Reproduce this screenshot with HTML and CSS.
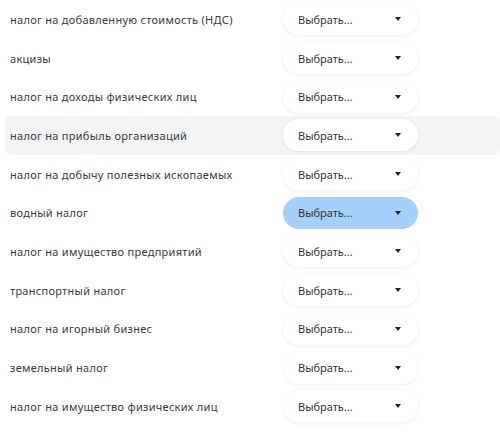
FILE: index.html
```html
<!DOCTYPE html>
<html lang="ru">
<head>
    <meta charset="UTF-8">
    <title>Налоги</title>
    <link rel="stylesheet" href="styles.css">
</head>
<body>
    <div class="tax-list">
        <div class="tax-row">
            <span class="tax-name">налог на добавленную стоимость (НДС)</span>
            <div class="select"><span>Выбрать...</span><i class="arrow"></i></div>
        </div>
        <div class="tax-row">
            <span class="tax-name">акцизы</span>
            <div class="select"><span>Выбрать...</span><i class="arrow"></i></div>
        </div>
        <div class="tax-row">
            <span class="tax-name">налог на доходы физических лиц</span>
            <div class="select"><span>Выбрать...</span><i class="arrow"></i></div>
        </div>
        <div class="tax-row hover">
            <span class="tax-name">налог на прибыль организаций</span>
            <div class="select"><span>Выбрать...</span><i class="arrow"></i></div>
        </div>
        <div class="tax-row">
            <span class="tax-name">налог на добычу полезных ископаемых</span>
            <div class="select"><span>Выбрать...</span><i class="arrow"></i></div>
        </div>
        <div class="tax-row">
            <span class="tax-name">водный налог</span>
            <div class="select active"><span>Выбрать...</span><i class="arrow"></i></div>
        </div>
        <div class="tax-row">
            <span class="tax-name">налог на имущество предприятий</span>
            <div class="select"><span>Выбрать...</span><i class="arrow"></i></div>
        </div>
        <div class="tax-row">
            <span class="tax-name">транспортный налог</span>
            <div class="select"><span>Выбрать...</span><i class="arrow"></i></div>
        </div>
        <div class="tax-row">
            <span class="tax-name">налог на игорный бизнес</span>
            <div class="select"><span>Выбрать...</span><i class="arrow"></i></div>
        </div>
        <div class="tax-row">
            <span class="tax-name">земельный налог</span>
            <div class="select"><span>Выбрать...</span><i class="arrow"></i></div>
        </div>
        <div class="tax-row">
            <span class="tax-name">налог на имущество физических лиц</span>
            <div class="select"><span>Выбрать...</span><i class="arrow"></i></div>
        </div>
    </div>
</body>
</html>
```

FILE: styles.css
```css
body {
    margin: 0;
    padding: 0;
    background-color: #fff;
    font-family: "Noto Sans", sans-serif;
    color: #3a3a3a;
}

.tax-list {
    display: flex;
    flex-direction: column;
}

.tax-row {
    display: flex;
    align-items: center;
    height: 38.7px;
    margin-left: 5px;
    padding-left: 5px;
    border-radius: 6px;
}

.tax-row.hover {
    background-color: #f3f4f6;
}

.tax-name {
    width: 273px;
    font-size: 11px;
    letter-spacing: 0.28px;
    white-space: nowrap;
}

.select {
    display: flex;
    align-items: center;
    justify-content: space-between;
    box-sizing: border-box;
    width: 135px;
    height: 32px;
    padding: 0 17px 0 15px;
    background: #fff;
    border-radius: 16px;
    box-shadow: 0 1px 4px rgba(0,0,0,0.07);
    font-size: 11px;
    color: #333;
}

.select.active {
    background: #a6cffb;
    box-shadow: none;
}

.arrow {
    width: 0;
    height: 0;
    border-left: 3px solid transparent;
    border-right: 3px solid transparent;
    border-top: 4px solid #222;
}
```
